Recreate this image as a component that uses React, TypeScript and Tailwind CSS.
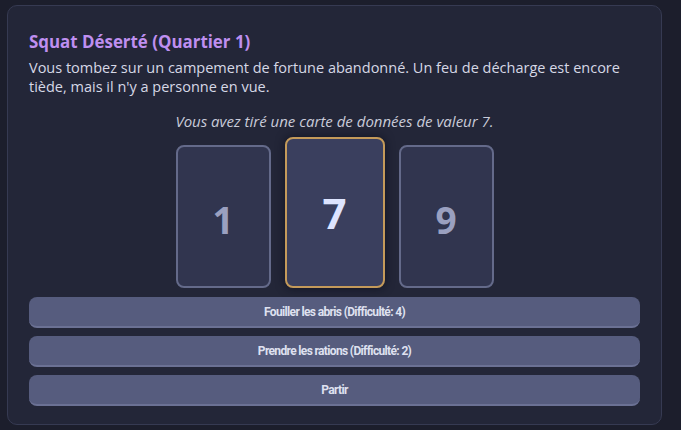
import React from "react";

export default function App() {
  const cards = [
    { v: "1", active: false },
    { v: "7", active: true },
    { v: "9", active: false },
  ];
  const actions = [
    "Fouiller les abris (Difficulté: 4)",
    "Prendre les rations (Difficulté: 2)",
    "Partir",
  ];
  return (
    <div
      className="w-[681px] h-[430px] bg-[#1c1e2c] pt-[5px] pl-[7px] overflow-hidden"
      style={{ fontFamily: '"Open Sans", "Noto Sans", sans-serif' }}
    >
      <div className="w-[655px] h-[420px] rounded-[10px] border border-[#363a52] bg-[#232638] px-[21px] pt-[25px] flex flex-col">
        <h2 className="text-[16.9px] leading-[22px] font-bold text-[#bf8ff0]">
          Squat Déserté (Quartier 1)
        </h2>
        <p className="mt-[5px] text-[14.5px] leading-[19px] text-[#d6d8e6]">
          Vous tombez sur un campement de fortune abandonné. Un feu de décharge est encore tiède, mais il n'y a personne en vue.
        </p>
        <p className="mt-[16px] text-center text-[15px] leading-[18px] italic text-[#c9cbd9]">
          Vous avez tiré une carte de données de valeur 7.
        </p>
        <div className="mt-[7px] flex justify-center items-end gap-[14px]">
          {cards.map((c) =>
            c.active ? (
              <div
                key={c.v}
                className="w-[100px] h-[151px] rounded-[8px] border-2 border-[#c49a5a] bg-[#3a3f5e] flex items-center justify-center shadow-[0_0_10px_rgba(10,12,25,0.7)]"
              >
                <span className="text-[42px] font-bold text-[#dde4ff]">{c.v}</span>
              </div>
            ) : (
              <div
                key={c.v}
                className="w-[95px] h-[143px] rounded-[8px] border-2 border-[#646a8a] bg-[#31354f] flex items-center justify-center"
              >
                <span className="text-[37px] font-bold text-[#9aa0c0] mt-[6px]">{c.v}</span>
              </div>
            )
          )}
        </div>
        <div className="mt-[9px] flex flex-col gap-[8px]">
          {actions.map((a) => (
            <button
              key={a}
              className="h-[31px] w-full rounded-[8px] bg-[#565c7e] border-b-2 border-[#6b7194] text-[12px] font-bold text-[#dfe1f0] tracking-[-0.65px]"
              style={{ fontFamily: '"Roboto", "Liberation Sans", sans-serif' }}
            >
              {a}
            </button>
          ))}
        </div>
      </div>
    </div>
  );
}
